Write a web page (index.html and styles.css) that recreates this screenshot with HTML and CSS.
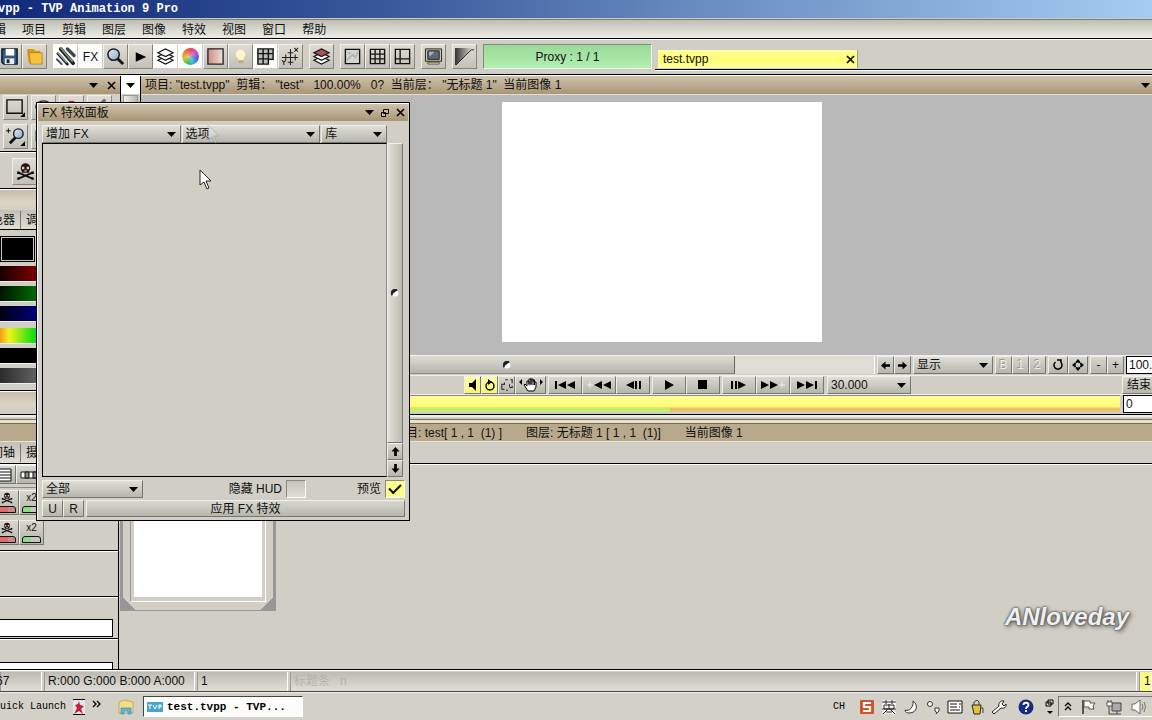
FILE: index.html
```html
<!DOCTYPE html>
<html lang="zh-CN">
<head>
<meta charset="utf-8">
<title>TVP Animation 9 Pro</title>
<link rel="stylesheet" href="styles.css">
</head>
<body>
<svg class="sprite" aria-hidden="true">
  <linearGradient id="g-pink"><stop offset="0" stop-color="#c98d80"/><stop offset="1" stop-color="#eee0da"/></linearGradient>
  <linearGradient id="g-dark"><stop offset="0" stop-color="#333"/><stop offset="1" stop-color="#d8d8d0"/></linearGradient>
  <linearGradient id="g-lens" x2="1" y2="1"><stop offset="0" stop-color="#e4edf6"/><stop offset="1" stop-color="#8ea6c0"/></linearGradient>
  <symbol id="i-down" viewBox="0 0 9 5"><path d="M0 0h9L4.500 5z"/></symbol>
  <symbol id="i-x" viewBox="0 0 9 9"><path d="M1 1l7 7M8 1L1 8" stroke="#000" stroke-width="1.600"/></symbol>
  <symbol id="i-lens" viewBox="0 0 20 20"><path d="M12 12l6 6" stroke="#111" stroke-width="3"/><circle cx="8" cy="8" r="6" fill="url(#g-lens)" stroke="#15202c" stroke-width="1.600"/></symbol>
  <symbol id="i-layers" viewBox="0 0 20 20"><g fill="#fff" stroke="#111" stroke-width="1.200"><path d="M2 14l8-4 8 4-8 4z"/><path d="M2 10l8-4 8 4-8 4z"/><path class="tint" d="M2 6l8-4 8 4-8 4z"/></g></symbol>
  <symbol id="i-skull" viewBox="0 0 16 16"><path d="M2 9l12 5M14 9L2 14" stroke="#111" stroke-width="1.600"/><path d="M4 5a4 4 0 018 0c0 2-1 2-1 4H5c0-2-1-2-1-4z" fill="#2a1510"/><path d="M5 4h2v2H5zM9 4h2v2H9zM7 7h2v1H7z" fill="#d8d0c0"/><path d="M1 8h2v2H1zM13 8h2v2h-2zM1 13h2v2H1zM13 13h2v2h-2z"/></symbol>
  <symbol id="i-dot" viewBox="0 0 8 8"><circle cx="4" cy="4" r="3.500" fill="#fff"/><path d="M7 1A3.500 3.500 0 101 7Q2 4 4 3z" fill="#222"/></symbol>
  <symbol id="i-up" viewBox="0 0 10 10"><path d="M5 0l4.500 5H6.500v5h-3V5H.5z"/></symbol>
</svg>

<div class="app">
  <header class="titlebar">vpp - TVP Animation 9 Pro</header>

  <nav class="menubar">
    <button type="button">辑</button><button type="button">项目</button><button type="button">剪辑</button><button type="button">图层</button><button type="button">图像</button><button type="button">特效</button><button type="button">视图</button><button type="button">窗口</button><button type="button">帮助</button>
  </nav>

  <div class="toolbar">
    <div class="group group-first">
      <button class="tool" type="button" aria-label="保存"><svg viewBox="0 0 20 20"><path d="M2 2h16v16H4l-2-2z" fill="#35597e" stroke="#0c1a2a" stroke-width="1.500"/><path d="M6 2h9v7H6z" fill="#fff"/><path d="M5 12h10v6H5z" fill="#e8eef2"/><path d="M7 13h3v4H7z" fill="#123"/></svg></button>
      <button class="tool" type="button" aria-label="打开"><svg viewBox="0 0 20 20"><path d="M2 4l1-2h6l2 2h5v13H4z" fill="#d99a12"/><path d="M4 6h14v12H6z" fill="#f4c53a" stroke="#a8700c" stroke-width=".7"/></svg></button>
    </div>
    <div class="group">
      <button class="tool on" type="button" aria-label="画笔"><svg viewBox="0 0 20 20"><g stroke-linecap="round"><path d="M2 7l10 11" stroke="#222" stroke-width="3"/><path d="M2 6l9 10" stroke="#8fa0a8" stroke-width="1.500"/><path d="M5 2l13 15" stroke="#1b2528" stroke-width="4"/><path d="M5 1l12 14" stroke="#79936f" stroke-width="1.800"/><path d="M12 2l7 7" stroke="#3d4650" stroke-width="3.500"/><path d="M1 13l5 5" stroke="#445" stroke-width="2"/></g></svg></button>
      <button class="tool on" type="button">FX</button>
      <button class="tool" type="button" aria-label="缩放"><svg><use href="#i-lens"/></svg></button>
      <button class="tool" type="button" aria-label="播放"><svg viewBox="0 0 20 20"><path d="M5 5.500l11 5L5 15.500z"/></svg></button>
      <button class="tool on" type="button" aria-label="图层"><svg><use href="#i-layers"/></svg></button>
      <button class="tool on" type="button" aria-label="颜色"><span class="wheel"></span></button>
      <button class="tool" type="button" aria-label="纸张"><svg viewBox="0 0 20 20"><path d="M2 2h16v16H2z" fill="url(#g-pink)" stroke="#222" stroke-width="1.400"/></svg></button>
      <button class="tool" type="button" aria-label="灯箱"><svg viewBox="0 0 20 20"><path d="M5 8a5 5 0 0110 0c0 3-2 3-2 6H8c0-3-3-3-3-6z" fill="#fff6c8"/><path d="M8 14h5v3H8z" fill="#b6ac84"/></svg></button>
      <button class="tool on" type="button" aria-label="表格"><svg viewBox="0 0 20 20"><path d="M2 2h16v11h-5v5H2z" fill="#b9bdb8"/><path d="M2 2h16v11h-5v5H2zM2 7h16M2 12.500h11M7.500 2v16M13 2v11" fill="none" stroke="#111" stroke-width="1.500"/></svg></button>
      <button class="tool" type="button" aria-label="坐标"><svg viewBox="0 0 20 20"><path d="M1 11h17M10 2v17M5 8v6M15 8v6M7 6h6M7 16h6M14 1l4 4M18 1l-4 4M1 14l2 2 2-2M3 16v3" fill="none" stroke="#222" stroke-width="1.100"/></svg></button>
    </div>
    <div class="group">
      <button class="tool tinted" type="button" aria-label="图层栈"><svg><use href="#i-layers"/></svg></button>
    </div>
    <div class="group">
      <button class="tool" type="button" aria-label="背景"><svg viewBox="0 0 20 20"><path d="M2.500 2.500h15v15h-15z" fill="#d4d4d0" stroke="#111" stroke-width="1.400"/><path d="M4 14l6-6 3 3 3-6M5 6l3 1" stroke="#b4b4b0" fill="none" stroke-width="2"/></svg></button>
      <button class="tool" type="button" aria-label="网格"><svg viewBox="0 0 20 20"><path d="M2.500 2.500h15v15h-15zM7.500 2v16M12.500 2v16M2 7.500h16M2 12.500h16" fill="none" stroke="#111" stroke-width="1.400"/></svg></button>
      <button class="tool" type="button" aria-label="安全框"><svg viewBox="0 0 20 20"><path d="M2.500 2.500h15v15h-15zM7.500 2v16M2 12.500h16" fill="none" stroke="#111" stroke-width="1.400"/></svg></button>
    </div>
    <div class="group">
      <button class="tool" type="button" aria-label="显示器"><svg viewBox="0 0 20 20"><path d="M1.500 2h17v13h-17z" fill="#c9c6b0" stroke="#222"/><path d="M4 4h12v9H4z" fill="#5d6876" stroke="#222"/><path d="M5 5h6l-5 5z" fill="#a8b4c0"/><path d="M4 16h12v2H4z" fill="#d8d29a" stroke="#333" stroke-width=".7"/></svg></button>
    </div>
    <div class="group">
      <button class="tool" type="button" aria-label="渐变"><svg viewBox="0 0 20 20"><path d="M0 1h18L1 19H0z" fill="url(#g-dark)"/><path d="M1 19L17 3h3" fill="none" stroke="#222"/></svg></button>
    </div>
    <div class="proxy">Proxy : 1 / 1</div>
    <div class="tabs">
      <div class="tab"><span>test.tvpp</span><button type="button" aria-label="关闭"><svg><use href="#i-x"/></svg></button></div>
    </div>
  </div>

  <main class="upper">
    <aside class="side">
      <div class="panel-head panel-head-end"><svg class="arrow"><use href="#i-down"/></svg><svg class="close"><use href="#i-x"/></svg></div>
      <div class="tools">
        <button class="tool" type="button" aria-label="矩形"><svg viewBox="0 0 20 20"><path d="M1 2h16v14H1z" fill="none" stroke="#111" stroke-width="1.500"/><path d="M20 15v5h-5z"/></svg></button>
        <button class="tool" type="button" aria-label="椭圆"><svg viewBox="0 0 20 20"><ellipse cx="10" cy="9" rx="8" ry="6" fill="none" stroke="#222" stroke-width="1.500"/></svg></button>
        <button class="tool" type="button" aria-label="填充"><svg viewBox="0 0 20 20"><path d="M7 3h6v14H7z" fill="#c33"/></svg></button>
        <button class="tool" type="button" aria-label="取色"><svg viewBox="0 0 20 20"><path d="M4 16L15 3" stroke="#777" stroke-width="4" stroke-linecap="round"/></svg></button>
        <button class="tool" type="button" aria-label="放大"><svg viewBox="0 0 20 20"><path d="M10 11l-6 6" stroke="#111" stroke-width="3"/><circle cx="13" cy="7" r="5" fill="url(#g-lens)" stroke="#15202c" stroke-width="1.500"/><path d="M0 4h5M2.500 1.500v5" stroke="#111"/><path d="M20 15v5h-5z"/></svg></button>
        <button class="tool" type="button" aria-label="平移"><svg viewBox="0 0 20 20"><path d="M2 4h14v11H2zM2 4l7 6" fill="none" stroke="#555"/></svg></button>
      </div>
      <div class="skull-row"><button class="tool" type="button" aria-label="清除"><svg viewBox="0 0 16 16"><use href="#i-skull"/></svg></button></div>
      <div class="strip"></div>
      <div class="side-tabs"><button type="button">色器</button><button type="button">调色</button></div>
      <div class="color-panel">
        <div class="swatch"></div>
        <div class="bar bar-red"></div><div class="bar bar-green"></div><div class="bar bar-blue"></div>
        <div class="bar bar-hue"></div><div class="bar bar-sat"></div><div class="bar bar-lum"></div>
      </div>
      <div class="strip"></div>
    </aside>

    <div class="gutter">
      <button type="button" aria-label="菜单"><svg class="arrow"><use href="#i-down"/></svg></button>
      <div class="v-thumb"></div>
    </div>

    <section class="document">
      <div class="panel-head doc-head"><span>项目:&nbsp;"test.tvpp"&nbsp; 剪辑：&nbsp;"test"&nbsp;&nbsp; 100.00%&nbsp;&nbsp; 0?&nbsp; 当前层：&nbsp;"无标题 1"&nbsp; 当前图像 1</span><svg class="arrow"><use href="#i-down"/></svg></div>
      <div class="stage"><div class="page"></div></div>
      <div class="row">
        <div class="h-scroll"><div class="h-thumb"><svg class="dot"><use href="#i-dot"/></svg></div></div>
        <div class="cluster">
          <button class="btn" type="button" aria-label="向左"><svg class="arr left"><use href="#i-up"/></svg></button><button class="btn" type="button" aria-label="向右"><svg class="arr right"><use href="#i-up"/></svg></button>
        </div>
        <span class="pick w80"><select aria-label="显示"><option>显示</option></select><svg class="arrow"><use href="#i-down"/></svg></span>
        <div class="cluster dim"><button class="btn" type="button">B</button><button class="btn" type="button">1</button><button class="btn" type="button">2</button></div>
        <div class="cluster wide"><button class="btn" type="button" aria-label="重置"><svg viewBox="0 0 12 12"><path d="M3.500 3A4 4 0 109 3.500M9 4V1H5" fill="none" stroke="#000" stroke-width="1.500"/></svg></button><button class="btn" type="button" aria-label="居中"><svg viewBox="0 0 12 12"><path d="M6 0l2.500 3h-5zM6 12l2.500-3h-5zM0 6l3-2.500v5zM12 6L9 3.500v5z"/><circle cx="6" cy="6" r="3" fill="none" stroke="#000"/></svg></button></div>
        <div class="cluster"><button class="btn" type="button">-</button><button class="btn" type="button">+</button></div>
        <span class="edge"><input class="field" aria-label="缩放比例" value="100."></span>
      </div>
      <div class="row transport">
        <div class="cluster">
          <button class="btn lit" type="button" aria-label="声音"><svg viewBox="0 0 12 12"><path d="M2 4h3l4-4v12L5 8H2z"/></svg></button><button class="btn lit" type="button" aria-label="循环"><svg viewBox="0 0 12 12"><circle cx="6" cy="7" r="4" fill="none" stroke="#000" stroke-width="1.400"/><path d="M4 0l4 3-4 3z"/></svg></button><button class="btn" type="button" aria-label="选区"><svg viewBox="0 0 14 14"><path d="M5 1H8M11 1h2v4M13 8v2h-3M4 6H1v6h3M6 13h2M4 4v3M10 6v3" fill="none" stroke="#222" stroke-width="1.200"/></svg></button><button class="btn hand" type="button" aria-label="手形"><svg viewBox="0 0 24 14"><path d="M0 4l3-3v6zM24 4l-3-3v6z"/><path d="M8 8L6 6l-1 1 4 6h6l2-4V4h-1.500v3M8 8V3h2v4M10 6V1h2v6M12 6V1h2v6M14 4V2h1.500v5" fill="#fff" stroke="#000"/></svg></button>
        </div>
        <div class="cluster play">
          <button class="btn" type="button" aria-label="开头"><svg viewBox="0 0 20 10"><path d="M0 1h2v8H0zM11 1v8L3 5zM20 1v8l-8-4z"/></svg></button><button class="btn" type="button" aria-label="上一关键帧"><svg viewBox="0 0 24 10"><path d="M0 5h6M3 2v6" stroke="#eee"/><path d="M15 1v8L7 5zM24 1v8l-8-4z"/></svg></button><button class="btn" type="button" aria-label="上一帧"><svg viewBox="0 0 16 10"><path d="M9 1v8L1 5zM10 1h2v8h-2zM14 1h2v8h-2z"/></svg></button>
        </div>
        <div class="cluster play"><button class="btn" type="button" aria-label="播放"><svg viewBox="0 0 10 10"><path d="M1 0l9 5-9 5z"/></svg></button><button class="btn" type="button" aria-label="停止"><svg viewBox="0 0 10 10"><path d="M0 0h9v9H0z"/></svg></button></div>
        <div class="cluster play"><button class="btn" type="button" aria-label="下一帧"><svg viewBox="0 0 16 10"><path d="M0 1h2v8H0zM4 1h2v8H4zM7 1l8 4-8 4z"/></svg></button><button class="btn" type="button" aria-label="下一关键帧"><svg viewBox="0 0 24 10"><path d="M0 1l8 4-8 4zM9 1l8 4-8 4z"/><path d="M18 5h6M21 2v6" stroke="#eee"/></svg></button><button class="btn" type="button" aria-label="结尾"><svg viewBox="0 0 20 10"><path d="M0 1l8 4-8 4zM9 1l8 4-8 4zM18 1h2v8h-2z"/></svg></button></div>
        <span class="pick w84"><select aria-label="帧率"><option>30.000</option></select><svg class="arrow"><use href="#i-down"/></svg></span>
        <span class="edge edge-last"><button class="btn" type="button">结束</button></span>
      </div>
      <div class="row timeline">
        <div class="track"><div class="track-used"></div></div>
        <span class="edge"><input class="field" aria-label="结束帧" value="0"></span>
      </div>
    </section>
  </main>

  <div class="divider"></div>

  <section class="lower">
    <aside class="side side-low">
      <div class="panel-head plain"></div>
      <div class="side-tabs low-tabs"><button type="button">间轴</button><button type="button">摄影表</button></div>
      <div class="view-row"><button class="btn" type="button" aria-label="列表"><svg viewBox="0 0 18 14"><path d="M0 1h17v12H0zM0 4h17M0 7h17M0 10h17" fill="#fff" stroke="#111"/></svg></button><button class="btn" type="button" aria-label="胶片"><svg viewBox="0 0 18 14"><path d="M0 4h18v6H0z" fill="#fff" stroke="#111"/><path d="M4 4h4v6H4zM12 4h4v6h-4z" fill="#888" stroke="#111"/></svg></button></div>
      <div class="cut-row"><button class="btn cut red" type="button" aria-label="删除"><svg viewBox="0 0 16 16"><use href="#i-skull"/></svg><i></i></button><button class="btn cut" type="button">x2<i></i></button></div>
      <div class="cut-row last"><button class="btn cut red" type="button" aria-label="删除"><svg viewBox="0 0 16 16"><use href="#i-skull"/></svg><i></i></button><button class="btn cut" type="button">x2<i></i></button></div>
      <div class="slot slot-a"></div>
      <div class="slot slot-b"><input class="field" aria-label="备注"></div>
      <div class="slot slot-c"><input class="field" aria-label="名称"></div>
    </aside>
    <div class="frames">
      <div class="panel-head plain clip-head"><span>项目: test[ 1 , 1&nbsp; (1) ]</span><span>图层: 无标题 1 [ 1 , 1 &nbsp;(1)]</span><span>当前图像 1</span></div>
      <div class="frames-top"></div>
      <div class="frames-body"><div class="thumb"><div class="thumb-in"><div class="thumb-img"></div></div></div></div>
    </div>
  </section>

  <footer class="status">
    <span class="cell c1">67</span><span class="cell c2">R:000 G:000 B:000 A:000</span><span class="cell c3">1</span><span class="cell c4">标题条&nbsp;&nbsp; n</span><span class="cell c5">1</span>
  </footer>

  <div class="taskbar">
    <span class="quick">uick Launch</span>
    <svg class="ql" viewBox="0 0 12 16"><path d="M0 0h12v16H0z" fill="#e8e4f0"/><path d="M0 0h12v1H0zM0 15h12v1H0z"/><path d="M6 2l1 4 4 1-3 3 2 5-4-3-5 3 3-6-2-3 3-1z" fill="#c8202c"/></svg>
    <svg class="chev" viewBox="0 0 9 8"><path d="M1 1l3 3-3 3M5 1l3 3-3 3" fill="none" stroke="#000" stroke-width="1.300"/></svg>
    <svg class="folder" viewBox="0 0 16 16"><path d="M1 3l5-2 9 2v11H1z" fill="#f2dd86" stroke="#b59a44" stroke-width=".7"/><path d="M3 15V9h10v6h-3v-3H6v3z" fill="#5db7e0" stroke="#3184ac" stroke-width=".6"/></svg>
    <button class="task" type="button"><svg viewBox="0 0 16 10"><path d="M0 0h16v10H0z" fill="#4aa3cc"/><path d="M1 3h4M3 3v4M6 3l2 4 2-4M12 7V3h2v2h-2" fill="none" stroke="#fff"/></svg>test.tvpp - TVP...</button>
    <div class="lang">
      <span class="ch">CH</span>
      <svg class="s" viewBox="0 0 16 16"><rect x="1" y="1" width="14" height="14" rx="1" fill="#d5512c"/><path d="M12 4H5v4h6v4H4" fill="none" stroke="#fff" stroke-width="2.200"/></svg>
      <svg class="s" viewBox="0 0 16 16"><path d="M1 3h14M5 1v4M11 1v4M3 6h10v4H3zM8 5v5M1 10h14M7 10l-5 5M9 10l5 5M5 13h6" fill="none" stroke="#fff" stroke-width="3"/><path d="M1 3h14M5 1v4M11 1v4M3 6h10v4H3zM8 5v5M1 10h14M7 10l-5 5M9 10l5 5M5 13h6" fill="none" stroke="#222"/></svg>
      <svg class="s" viewBox="0 0 16 16"><path d="M10 2c5 3 5 12-4 12-2 0-4-1-4-3 4 2 9-3 8-9z" fill="#fff" stroke="#333"/></svg>
      <svg class="s" viewBox="0 0 16 16"><circle cx="5" cy="5" r="2.500" fill="#fff" stroke="#333"/><path d="M10 9h4v3l-3 3c1-2 1-2-1-3z" fill="#fff" stroke="#333"/></svg>
      <svg class="s" viewBox="0 0 16 16"><path d="M1 2h14v12H1z" fill="#fff" stroke="#111"/><path d="M3 5h7M3 8h7M3 11h10M12 5h2M12 8h1" stroke="#111"/></svg>
      <svg class="s" viewBox="0 0 16 16"><path d="M3 6h9l-1 9H5z" fill="#e3c333" stroke="#322"/><path d="M5 6V3l3-2 2 2v3M11 9h3v5" fill="none" stroke="#443"/></svg>
      <svg class="s" viewBox="0 0 16 16"><path d="M1 13l7-6c-1-3 2-6 5-5l-2 3 2 2 2-2c1 3-2 5-5 4l-7 6z" fill="#fff" stroke="#222"/></svg>
    </div>
    <svg class="help" viewBox="0 0 16 16"><circle cx="8" cy="8" r="7.500" fill="#172a86"/><path d="M5.500 6c0-3 5-3 5 0 0 2-2.500 1.500-2.500 4M8 11v2" fill="none" stroke="#fff" stroke-width="1.800"/></svg>
    <svg class="mini" viewBox="0 0 9 16"><path d="M3 1h5v4H3zM1 3h5v4H1z" fill="#ddd" stroke="#000"/><path d="M2 12h6l-3 3z"/></svg>
    <div class="tray">
      <svg class="t-up" viewBox="0 0 8 10"><path d="M1 4l3-3 3 3M1 8l3-3 3 3" fill="none" stroke="#000" stroke-width="1.300"/></svg>
      <svg class="s" viewBox="0 0 16 16"><path d="M2 1v14" stroke="#555" stroke-width="2"/><path d="M3 2h6v2h5l-2 3 1 3H8V8H3z" fill="#fff" stroke="#555"/></svg>
      <svg class="s" viewBox="0 0 16 16"><path d="M6 4h9v8H6z" fill="#aaa" stroke="#444"/><path d="M8 15h7M11 12v3M3 7v8h5" stroke="#444" fill="none"/><path d="M1 3h5v4H1zM2 1v2M5 1v2" fill="#fff" stroke="#555"/></svg>
      <svg class="s" viewBox="0 0 16 16"><path d="M1 5h3l5-4v14l-5-4H1z" fill="#fff" stroke="#666"/><path d="M11 5q2 3 0 6M13 3q3 5 0 10" fill="none" stroke="#777"/></svg>
    </div>
  </div>
</div>

<section class="fx" aria-label="FX 特效面板">
  <div class="panel-head fx-head"><span>FX 特效面板</span><svg class="arrow"><use href="#i-down"/></svg><svg class="restore" viewBox="0 0 8 8"><path d="M2.500.5h5v4h-5zM.5 3.500h4v4h-4z" fill="#cdbda3" stroke="#000"/></svg><svg class="close"><use href="#i-x"/></svg></div>
  <div class="fx-picks">
    <span class="pick"><select aria-label="增加 FX"><option>增加 FX</option></select><svg class="arrow"><use href="#i-down"/></svg></span>
    <span class="pick"><select aria-label="选项"><option>选项</option></select><svg class="arrow"><use href="#i-down"/></svg></span>
    <span class="pick small"><select aria-label="库"><option>库</option></select><svg class="arrow"><use href="#i-down"/></svg></span>
  </div>
  <div class="fx-body">
    <div class="fx-list"></div>
    <div class="fx-scroll">
      <div class="v-bar"><svg class="dot"><use href="#i-dot"/></svg></div>
      <button class="btn" type="button" aria-label="向上"><svg class="arr"><use href="#i-up"/></svg></button>
      <button class="btn" type="button" aria-label="向下"><svg class="arr flip"><use href="#i-up"/></svg></button>
    </div>
  </div>
  <div class="fx-opts">
    <span class="pick w100"><select aria-label="范围"><option>全部</option></select><svg class="arrow"><use href="#i-down"/></svg></span>
    <label class="hud">隐藏 HUD<input type="checkbox"></label>
    <label>预览<input type="checkbox" checked></label>
  </div>
  <div class="fx-apply"><button class="btn" type="button">U</button><button class="btn" type="button">R</button><button class="btn apply" type="button">应用 FX 特效</button></div>
</section>

<svg class="cursor ghost" viewBox="0 0 13 21"><path d="M1 1v15l4-3 3 7 2-1-3-7h5z" fill="#fff" stroke="#555"/></svg>
<svg class="cursor" viewBox="0 0 13 21"><path d="M1 1v15l4-3 3 7 2-1-3-7h5z" fill="#fff" stroke="#222"/></svg>
<div class="mark">ANloveday</div>
</body>
</html>
```

FILE: styles.css
```css
* { box-sizing: border-box; }
body {
  margin: 0;
  overflow: hidden;
  background: #d1cfc5;
  color: #111;
  font: 12px/16px "Liberation Sans", "Noto Sans CJK SC", sans-serif;
  white-space: nowrap;
}
button, select, input { font: inherit; color: inherit; margin: 0; padding: 0; border-radius: 0; }
button { border: 0; background: none; display: flex; align-items: center; justify-content: center; }
svg { display: block; flex: none; overflow: visible; }
.sprite { position: absolute; width: 0; height: 0; }
.app { display: flex; flex-direction: column; height: 100vh; overflow: hidden; }
.app > * { flex: none; }

.arrow { width: 9px; height: 5px; }
.close { width: 9px; height: 9px; }
.dot { width: 8px; height: 8px; }
.arr { width: 9px; height: 9px; }
.left { transform: rotate(-90deg); }
.right { transform: rotate(90deg); }
.flip { transform: rotate(180deg); }

.titlebar {
  height: 19px;
  border-bottom: 1px solid #c9c9bf;
  background: linear-gradient(90deg, #10297a, #3c5a9c 35%, #6487bd 58%, #a3cdf1);
  color: #fff;
  font: bold 12px/18px "Liberation Mono", monospace;
  text-indent: -2px;
}
.menubar {
  display: flex;
  gap: 16px;
  height: 20px;
  padding-top: 2px;
  border-top: 1px solid #808078;
  border-bottom: 1px solid #000;
  background: linear-gradient(#bdbdb3, #dddcd3 60%, #ecebe4);
}
.menubar button { line-height: 16px; }
.menubar button:first-child { margin-left: -6px; }

.toolbar {
  display: flex;
  height: 36px;
  padding-top: 4px;
  gap: 6px;
  border-top: 1px solid #fff;
  border-bottom: 1px solid #000;
  background: #d1cfc5;
}
.group { display: flex; flex: none; }
.group-first { margin-left: -3px; }
.tool {
  width: 25px;
  height: 25px;
  border: 1px solid;
  border-color: #efeee8 #85857c #85857c #efeee8;
  background: linear-gradient(#dedcd4, #c2c0b6);
}
.tool svg { width: 19px; height: 19px; }
.tool.on { background: #fdfdfb; border-color: #fdfdfb #ccc #ccc #fdfdfb; }
.tinted { --tint: #a8555a; }
.tint { fill: var(--tint, #fff); }
.wheel {
  width: 17px;
  height: 17px;
  border-radius: 50%;
  background: radial-gradient(#ddd8, #fff0 60%), conic-gradient(#e9405a, #d04bc8, #4a5be0, #2fb3d8, #3cc050, #d8c83a, #ee7a3a, #e9405a);
}
.proxy {
  width: 169px;
  height: 25px;
  border: 1px solid;
  border-color: #7d8f7a #f4f4f0 #f4f4f0 #7d8f7a;
  background: linear-gradient(#98da98, #b2efb0);
  line-height: 24px;
  text-align: center;
}
.tabs { display: flex; flex: 1; height: 26px; margin-left: -3px; padding: 6px 3px 1px; border-bottom: 1px solid #000; box-shadow: 0 1px #fff; }
.tab {
  display: flex;
  align-items: center;
  justify-content: space-between;
  width: 200px;
  height: 18px;
  padding: 0 2px 0 5px;
  border-right: 1px solid #999;
  background: linear-gradient(#ffffa4, #fdfd70 50%, #ffffa0);
}
.tab svg { width: 9px; height: 9px; }

.upper { display: flex; border-top: 1px solid #fff; border-bottom: 1px solid #000; }
.side { flex: none; width: 121px; border-right: 1px solid #000; overflow: hidden; }
.panel-head {
  display: flex;
  align-items: center;
  flex: none;
  height: 18px;
  background: linear-gradient(#cfc2ac, #a89674);
}
.panel-head-end { justify-content: flex-end; gap: 9px; padding-right: 4px; }
.tools { display: grid; grid-template-columns: repeat(4, 25px); gap: 3px; height: 58px; padding: 1px 3px; border-bottom: 1px solid #000; }
.skull-row { height: 37px; padding: 5px 12px; border-top: 1px solid #fff; border-bottom: 1px solid #000; }
.skull-row .tool { width: 26px; height: 27px; }
.strip { height: 21px; border-top: 1px solid #fff; background: linear-gradient(#c9bda9, #dcd3c4 60%, #d1cfc5); }
.side-tabs { display: flex; flex: none; height: 20px; padding-top: 1px; border-bottom: 1px solid #000; background: linear-gradient(#c3c1b7, #dfddd4); }
.side-tabs button { height: 18px; padding: 0 5px; border-right: 1px solid #777; }
.side-tabs button:first-child { margin-left: -14px; }
.color-panel { height: 161px; padding-top: 6px; border-bottom: 1px solid #000; }
.swatch { width: 35px; height: 26px; margin-bottom: 4px; border: 1px solid #000; background: #000; box-shadow: inset 0 0 0 1px #c9c9bf; }
.bar { height: 15px; margin-bottom: 5px; box-shadow: 0 1px #eee; }
.bar-red { background: linear-gradient(90deg, #180000, #7c0000 36px, #f00); }
.bar-green { background: linear-gradient(90deg, #001400, #006c00 36px, #0f0); }
.bar-blue { background: linear-gradient(90deg, #000014, #000078 36px, #00f); margin-bottom: 7px; }
.bar-hue { background: linear-gradient(90deg, #f59a1c, #f2f21c 9px, #10e010 34px, #0cf); }
.bar-sat { background: #000; }
.bar-lum { background: linear-gradient(90deg, #2c2c2c, #606060 36px, #eee); }

.gutter { flex: none; width: 20px; border-right: 1px solid #000; }
.gutter button { width: 19px; height: 18px; background: #fff; }
.v-thumb { width: 15px; height: 250px; margin: 1px 2px; border: 1px solid #999; background: linear-gradient(90deg, #eee, #b5b5ad); }

.document { flex: 1; min-width: 0; overflow: hidden; }
.doc-head { justify-content: space-between; padding: 0 2px 0 4px; }
.stage {
  display: flex;
  justify-content: center;
  padding: 7px 0 13px 31px;
  border-top: 1px solid #e4dfd0;
  background: #b9b9b9;
}
.page { width: 320px; height: 240px; background: #fff; }
.row { display: flex; height: 20px; gap: 2px; border-top: 1px solid #eee; }
.h-scroll { flex: 1; height: 18px; background: #deddd3; border-right: 1px solid #fff; }
.h-thumb {
  display: flex;
  align-items: center;
  justify-content: center;
  width: 62%;
  height: 18px;
  margin-left: 19%;
  border-right: 1px solid #666;
  border-bottom: 1px solid #888;
  background: linear-gradient(#dddcd3, #b6b5ac);
}
.cluster { display: flex; flex: none; }
.btn {
  width: 17px;
  height: 18px;
  border: 1px solid;
  border-color: #efeee8 #77776f #77776f #efeee8;
  background: linear-gradient(#d8d7ce, #b7b6ad);
}
.btn svg { width: 12px; height: 12px; }
.btn .arr { width: 9px; height: 9px; }
.wide .btn { width: 20px; }
.dim { color: #eeede6; }
.dim .btn { text-shadow: -1px -1px #99988e; }
.lit { background: linear-gradient(#ffffa4, #f6f67a); }
.hand { width: 31px; }
.hand svg { width: 24px; height: 14px; }
.play .btn { width: 34px; }
.play svg { width: auto; height: 10px; }
.pick {
  display: flex;
  align-items: center;
  position: relative;
  flex: none;
  height: 18px;
  border: 1px solid;
  border-color: #efeee8 #77776f #77776f #efeee8;
  background: linear-gradient(#e0dfd7, #b7b6ad);
}
.pick select { appearance: none; width: 100%; height: 16px; padding-left: 3px; border: 0; background: none; }
.pick .arrow { position: absolute; right: 4px; top: 6px; pointer-events: none; }
.w80 { width: 80px; }
.w84 { width: 84px; }
.w100 { width: 101px; }
.edge { flex: none; width: 26px; overflow: hidden; }
.edge .btn { width: 48px; justify-content: flex-start; padding-left: 4px; }
.edge-last { width: 30px; margin-left: auto; }
.field { display: block; width: 60px; height: 18px; padding: 0 2px; border: 1px solid #000; background: #fff; }
.transport { height: 19px; padding-left: 323px; }
.transport .w84 { margin-left: 1px; }
.timeline { gap: 3px; }
.timeline .edge { width: 29px; }
.track { display: flex; align-items: flex-end; flex: 1; height: 17px; border-top: 1px solid #888; background: linear-gradient(#ffff96, #fbfb72 11px, #e8c070 12px); }
.track-used { width: 54%; height: 4px; background: #c3ef6c; }

.divider { height: 9px; border-top: 2px solid #eee; border-bottom: 1px solid #776d58; background: linear-gradient(#d1cfc5 2px, #776d58 2px 3px, #e9e4c8 3px); }

.app > .lower { display: flex; flex: 1; min-height: 0; overflow: hidden; border-bottom: 1px solid #000; }
.plain { background: #b9a98c; border-bottom: 1px solid #e8e4da; }
.side-low { display: flex; flex-direction: column; width: 119px; }
.low-tabs { height: 22px; padding-top: 2px; }
.view-row { display: flex; flex: none; height: 24px; border-bottom: 1px solid #888; border-top: 1px solid #fff; }
.view-row .btn { width: 27px; height: 19px; }
.view-row .btn:first-child { margin-left: -11px; }
.view-row svg { width: 18px; height: 14px; }
.cut-row { display: flex; flex: none; height: 30px; padding-top: 2px; }
.cut-row.last { height: 33px; border-bottom: 1px solid #000; }
.cut { flex-direction: column; justify-content: space-between; width: 25px; height: 25px; padding: 1px; font-size: 10px; line-height: 12px; }
.cut:first-child { margin-left: -6px; }
.cut i { width: 19px; height: 7px; border: 1px solid #111; border-radius: 3px 3px 0 0; background: linear-gradient(90deg, #8edb86 50%, #c8c8c0 50%); }
.cut.red i { background: linear-gradient(90deg, #dc6c6c 60%, #c88 60%); }
.slot { flex: none; border-top: 1px solid #fff; border-bottom: 1px solid #000; }
.slot-a { height: 46px; }
.slot-b { height: 42px; padding-top: 21px; }
.slot-c { padding-top: 22px; border-bottom: 0; }
.slot .field { width: 114px; margin-left: -1px; }
.frames { display: flex; flex-direction: column; flex: 1; min-width: 0; }
.clip-head { gap: 24px; padding-left: 275px; }
.frames-top { flex: none; height: 22px; border-bottom: 1px solid #000; }
.frames-body { flex: 1; padding: 8px 1px; border-top: 1px solid #fff; }
.thumb {
  width: 156px;
  height: 138px;
  padding: 7px 10px 9px;
  border: solid #979797;
  border-width: 1px 3px 1px 3px;
  background: linear-gradient(45deg, #979797 9px, #0000 9px), linear-gradient(-45deg, #979797 9px, #0000 9px), #d1cfc5;
}
.thumb-in { height: 121px; margin: 0 -3px; padding: 3px; border: 1px solid; border-color: #999 #fff #fff #999; }
.thumb-img { height: 112px; background: #fff; }

.status { display: flex; height: 22px; padding: 1px 0; gap: 2px; border-top: 1px solid #fff; border-bottom: 1px solid #444; background: #d1cfc5; }
.cell { height: 19px; padding: 0 3px; border-left: 1px solid #999; border-right: 1px solid #fff; background: linear-gradient(#bdbbb2, #e0ded6); line-height: 19px; }
.c1 { width: 42px; text-indent: -8px; }
.c2 { width: 151px; }
.c3 { width: 91px; }
.c4 { flex: 1; color: #b4b2a9; }
.c5 { width: 13px; padding-left: 4px; background: #fafa86; overflow: hidden; }

.taskbar { display: flex; align-items: center; height: 28px; border-top: 1px solid #eee; background: #d3d1c7; }
.quick, .ch { font: 10px/14px "Liberation Mono", monospace; color: #000; }
.ql { width: 12px; height: 16px; margin-left: 7px; }
.chev { width: 9px; height: 8px; margin: 0 17px 6px 7px; }
.folder { width: 16px; height: 16px; }
.task { justify-content: flex-start; gap: 4px; width: 160px; height: 21px; margin-left: 9px; padding-left: 3px; border: 1px solid; border-color: #444 #fff #fff #444; background: #fcfcfa; font: bold 11px/16px "Liberation Mono", monospace; color: #000; }
.task svg { width: 16px; height: 10px; }
.lang { display: flex; align-items: center; gap: 6px; margin-left: auto; }
.ch { margin-right: 8px; }
.s { width: 16px; height: 16px; }
.help { width: 16px; height: 16px; margin: 0 11px; }
.mini { width: 9px; height: 16px; margin-right: 4px; }
.tray { display: flex; align-items: center; gap: 9px; height: 21px; width: 94px; padding-left: 5px; border: 1px solid; border-color: #777 #777 #fff #777; border-right: 0; }
.t-up { width: 8px; height: 10px; }

.fx {
  position: absolute;
  left: 36px;
  top: 102px;
  width: 374px;
  padding: 1px 4px 3px 5px;
  border: 1px solid #000;
  background: #d1cfc5;
  box-shadow: inset 1px 1px #fff;
}
.fx-head { height: 17px; margin: 0 -3px 4px -4px; padding: 0 3px 0 4px; gap: 7px; }
.fx-head span { flex: 1; }
.restore { width: 8px; height: 8px; }
.fx-picks { display: flex; gap: 1px; padding-right: 18px; }
.fx-picks .pick { flex: 139; }
.fx-picks .small { flex: 65; }
.fx-body { display: flex; height: 334px; }
.fx-list { flex: 1; border: 1px solid #000; border-right-color: #888; }
.fx-scroll { display: flex; flex-direction: column; width: 16px; margin: 0 2px 0 0; }
.fx-scroll .btn { width: 16px; height: 17px; }
.v-bar { display: flex; flex: 1; align-items: center; justify-content: center; border: 1px solid; border-color: #eee #777 #777 #eee; background: linear-gradient(90deg, #e2e1d9, #babab0); }
.fx-opts { display: flex; align-items: center; height: 23px; }
.fx-opts label { display: flex; align-items: center; gap: 4px; }
.fx-opts .hud { margin: 0 51px 0 auto; }
.fx-opts input {
  appearance: none;
  width: 20px;
  height: 18px;
  border: 1px solid;
  border-color: #888 #fff #fff #888;
  background: linear-gradient(#c6c4bb, #deddd4);
}
.fx-opts input:checked { display: flex; align-items: center; justify-content: center; background: #fdfd8c; }
.fx-opts input:checked::before { content: ""; width: 10px; height: 5px; margin-top: -3px; border: solid #111; border-width: 0 0 2px 2px; transform: rotate(-45deg); }
.fx-apply { display: flex; }
.fx-apply .btn { width: 21px; height: 17px; }
.fx-apply .apply { flex: 1; margin-left: 2px; }

.cursor { position: absolute; left: 199px; top: 169px; width: 13px; height: 21px; }
.ghost { left: 207px; top: 124px; opacity: .2; }
.mark {
  position: absolute;
  right: 23px;
  bottom: 89px;
  color: #f0f0f0;
  font: italic bold 24px/28px "Liberation Sans", sans-serif;
  text-shadow: 0 0 2px #444, 0 0 3px #555, 2px 2px 4px #666;
}
```
